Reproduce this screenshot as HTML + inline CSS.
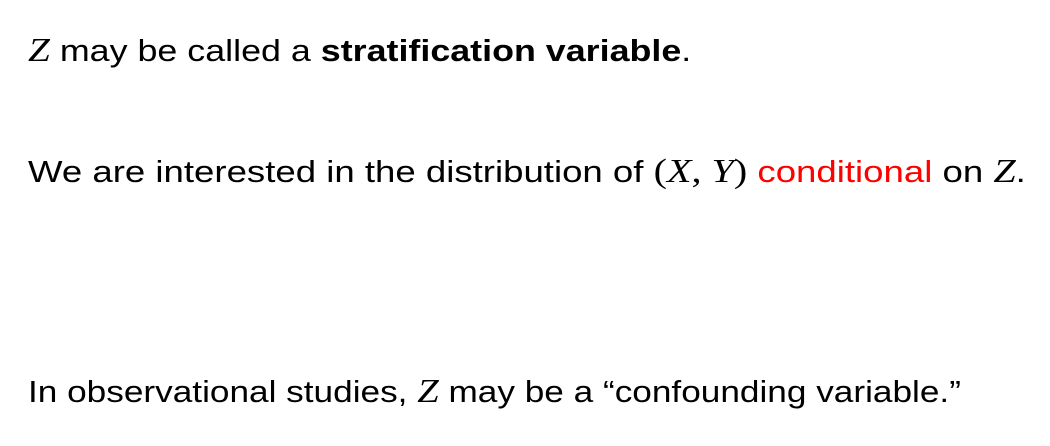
<!DOCTYPE html>
<html><head><style>
body{margin:0;width:1050px;height:446px;background:#fff;position:relative;overflow:hidden;font-family:"Liberation Sans",sans-serif;font-size:31px;color:#000}
.l{position:absolute;left:28px;white-space:nowrap;line-height:36px;transform-origin:0 50%}
.m{font-family:"Liberation Serif",serif;font-style:italic;font-size:34px}
.r{font-family:"Liberation Serif",serif;font-size:34px}
</style></head><body>
<div class="l" style="top:33px;transform:scaleX(1.156)"><span class="m">Z</span> may be called a <b>stratification variable</b>.</div>
<div class="l" style="top:154px;transform:scaleX(1.18)">We are interested in the distribution of <span class="r">(</span><span class="m">X</span><span class="r">, </span><span class="m">Y</span><span class="r">)</span> <span style="color:#f00">conditional</span> on <span class="m">Z</span>.</div>
<div class="l" style="top:374px;transform:scaleX(1.135)">In observational studies, <span class="m">Z</span> may be a “confounding variable.”</div>
</body></html>
